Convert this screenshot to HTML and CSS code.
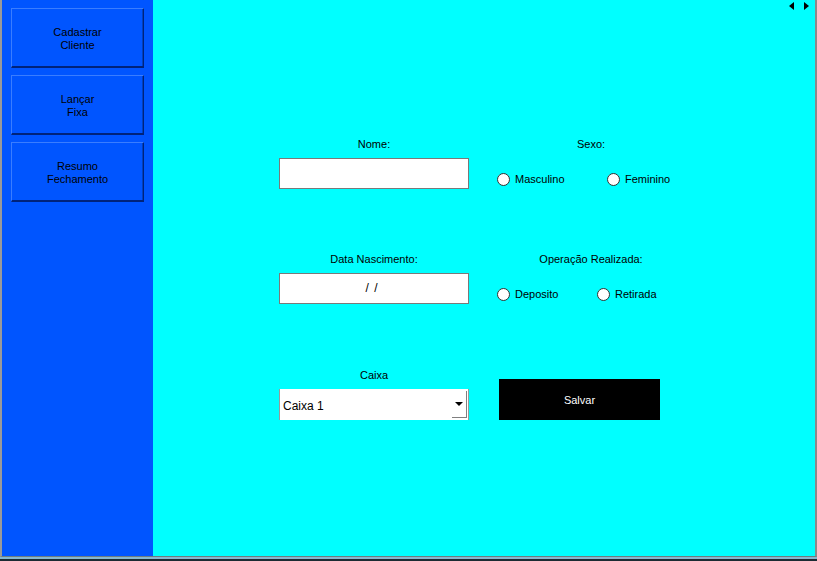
FILE: index.html
```html
<!DOCTYPE html>
<html lang="pt">
<head>
<meta charset="utf-8">
<title>Cadastro</title>
<link rel="stylesheet" href="styles.css">
</head>
<body>
<div class="window">
  <div class="frame">
    <nav class="sidebar">
      <button class="side-btn">Cadastrar<br>Cliente</button>
      <button class="side-btn">Lançar<br>Fixa</button>
      <button class="side-btn">Resumo<br>Fechamento</button>
    </nav>
    <main class="main">
      <div class="scroll-arrows">
        <span class="tri tri-left"></span>
        <span class="tri tri-right"></span>
      </div>
      <div class="form">
        <div class="row">
          <div class="field">
            <div class="label">Nome:</div>
            <div class="textbox"></div>
          </div>
          <div class="field">
            <div class="label">Sexo:</div>
            <div class="radios">
              <label class="opt opt-wide"><span class="radio"></span>Masculino</label>
              <label class="opt"><span class="radio"></span>Feminino</label>
            </div>
          </div>
        </div>
        <div class="row">
          <div class="field">
            <div class="label">Data Nascimento:</div>
            <div class="textbox date">/ /</div>
          </div>
          <div class="field">
            <div class="label">Operação Realizada:</div>
            <div class="radios">
              <label class="opt opt-mid"><span class="radio"></span>Deposito</label>
              <label class="opt"><span class="radio"></span>Retirada</label>
            </div>
          </div>
        </div>
        <div class="row row-last">
          <div class="field">
            <div class="label">Caixa</div>
            <div class="combo">
              <span class="combo-text">Caixa 1</span>
              <span class="combo-btn"><span class="combo-arrow"></span></span>
            </div>
          </div>
          <div class="field">
            <button class="save">Salvar</button>
          </div>
        </div>
      </div>
    </main>
  </div>
  <div class="bottom-edge"></div>
</div>
</body>
</html>
```
FILE: styles.css
```css
html, body {
  margin: 0;
  padding: 0;
  background: #1b2b33;
}
body {
  font-family: "Liberation Sans", Arial, sans-serif;
  font-size: 11px;
  color: #000;
}
.window {
  width: 817px;
  height: 561px;
  display: flex;
  flex-direction: column;
}
.frame {
  flex: 0 0 557px;
  display: flex;
  border-left: 2px solid #9a9a9a;
  border-right: 2px solid #8a8a8a;
  box-sizing: border-box;
  border-bottom: 1px solid #6c7c80;
}
.bottom-edge {
  height: 3px;
  background: #1b2b33;
  border-top: 2px solid #86b7cf;
  box-sizing: border-box;
}
.sidebar {
  width: 151px;
  background: #0055ff;
  padding: 8px 0 0 9px;
  box-sizing: border-box;
  display: flex;
  flex-direction: column;
  gap: 7px;
}
.side-btn {
  width: 133px;
  height: 60px;
  background: #0055ff;
  border-style: solid;
  border-width: 1px 1px 2px 1px;
  border-color: #3a7dff #00237a #00237a #3a7dff;
  box-shadow: inset -1px 0 0 #003fc0;
  font-family: "Liberation Sans", Arial, sans-serif;
  font-size: 11px;
  line-height: 13px;
  color: #000;
  padding: 3px 0 0 0;
  text-align: center;
}
.main {
  flex: 1;
  background: #00ffff;
  position: relative;
  padding: 138px 0 0 126px;
  box-sizing: border-box;
}
.scroll-arrows {
  position: absolute;
  top: 2px;
  right: 6px;
  display: flex;
  gap: 10px;
}
.tri {
  width: 0;
  height: 0;
  border-top: 4px solid transparent;
  border-bottom: 4px solid transparent;
}
.tri-left { border-right: 5px solid #000; }
.tri-right { border-left: 5px solid #000; }
.form {
  display: flex;
  flex-direction: column;
  gap: 64px;
}
.row {
  display: grid;
  grid-template-columns: 190px 188px;
  column-gap: 28px;
  height: 51px;
}
.row-last {
  margin-top: 1px;
}
.field {
  display: flex;
  flex-direction: column;
}
.label {
  height: 13px;
  line-height: 13px;
  text-align: center;
  margin-bottom: 7px;
}
.textbox {
  height: 31px;
  background: #fff;
  border: 1px solid #7a7a7a;
  box-sizing: border-box;
}
.date {
  text-align: center;
  line-height: 29px;
  font-size: 12px;
  letter-spacing: 1px;
  padding-right: 4px;
}
.radios {
  display: flex;
  margin-top: 15px;
}
.opt {
  display: flex;
  align-items: center;
  gap: 5px;
  height: 13px;
  line-height: 13px;
}
.opt-wide { width: 110px; }
.opt-mid { width: 100px; }
.radio {
  width: 13px;
  height: 13px;
  border-radius: 50%;
  background: #fff;
  border: 1px solid #333;
  box-sizing: border-box;
  flex: none;
}
.combo {
  height: 31px;
  background: #fff;
  border-left: 1px solid #9a9a9a;
  border-right: 1px solid #9a9a9a;
  box-sizing: border-box;
  display: flex;
  align-items: center;
  padding: 2px 1px 2px 3px;
}
.combo-text {
  flex: 1;
  font-size: 12px;
  padding-top: 2px;
}
.combo-btn {
  width: 15px;
  height: 27px;
  border-right: 1px solid #808080;
  border-bottom: 1px solid #808080;
  box-sizing: border-box;
  display: flex;
  align-items: center;
  justify-content: center;
}
.combo-arrow {
  width: 0;
  height: 0;
  border-left: 4px solid transparent;
  border-right: 4px solid transparent;
  border-top: 4px solid #000;
}
.save {
  margin: 10px 0 0 2px;
  width: 161px;
  height: 41px;
  background: #000;
  color: #fff;
  border: none;
  font-family: "Liberation Sans", Arial, sans-serif;
  font-size: 11px;
  padding: 0;
}
```
